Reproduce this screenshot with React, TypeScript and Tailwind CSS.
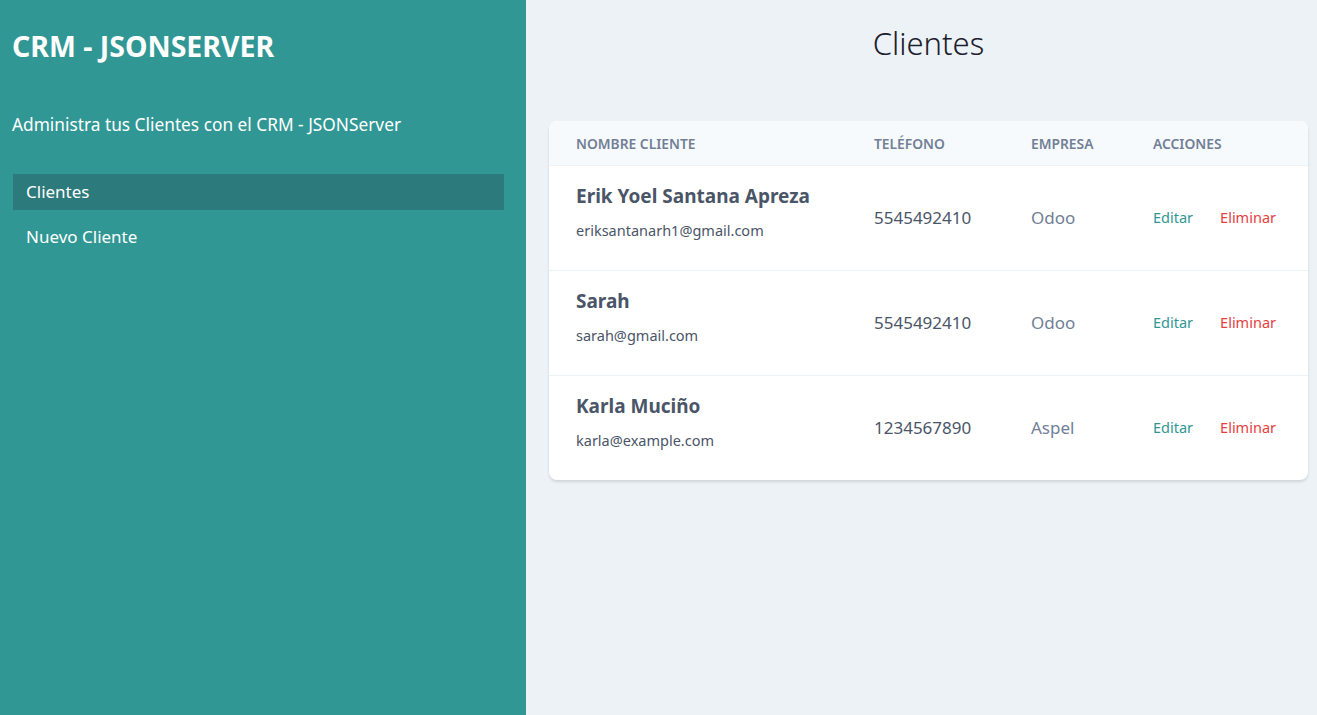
const clientes = [
  { nombre: 'Erik Yoel Santana Apreza', email: 'eriksantanarh1@gmail.com', telefono: '5545492410', empresa: 'Odoo' },
  { nombre: 'Sarah', email: 'sarah@gmail.com', telefono: '5545492410', empresa: 'Odoo' },
  { nombre: 'Karla Muciño', email: 'karla@example.com', telefono: '1234567890', empresa: 'Aspel' },
];

export default function App() {
  return (
    <div
      className="flex min-h-[715px] w-full"
      style={{ fontFamily: '"Noto Sans", "Open Sans", sans-serif' }}
    >
      <aside className="w-[526px] shrink-0 bg-[#319795] pl-[12px] pr-[22px] pt-[26px]">
        <h1 className="text-[28.5px] font-bold leading-10 text-white">CRM - JSONSERVER</h1>
        <p className="mt-[46px] text-[17.3px] text-white">Administra tus Clientes con el CRM - JSONServer</p>
        <nav className="mt-[36px] flex flex-col gap-[9px] pl-px">
          <a className="block h-9 bg-[#2c7a7b] px-[13px] text-[17px] leading-9 text-white">Clientes</a>
          <a className="block h-9 px-[13px] text-[17px] leading-9 text-white">Nuevo Cliente</a>
        </nav>
      </aside>

      <main className="flex-1 bg-[#edf2f7] pl-[23px] pr-[9px] pt-[20px]">
        <h2 className="text-center text-[31px] font-light leading-[46px] text-[#1a202c]">Clientes</h2>

        <div className="mt-[55px] overflow-hidden rounded-lg bg-white shadow-[0_2px_3px_rgba(0,0,0,0.12)]">
          <table className="w-full table-fixed border-collapse">
            <colgroup>
              <col className="w-[298px]" />
              <col className="w-[157px]" />
              <col className="w-[122px]" />
              <col />
            </colgroup>
            <thead>
              <tr className="h-[44px] border-b border-[#edf2f7] bg-[#f7fafc] text-left text-[13.8px] uppercase text-[#718096]">
                <th className="px-[27px] pt-[4px] font-semibold">Nombre Cliente</th>
                <th className="px-[27px] pt-[4px] font-semibold">Teléfono</th>
                <th className="px-[27px] pt-[4px] font-semibold">Empresa</th>
                <th className="px-[27px] pt-[4px] font-semibold">Acciones</th>
              </tr>
            </thead>
            <tbody>
              {clientes.map((c, i) => (
                <tr
                  key={c.nombre}
                  className={`h-[105px] ${i < clientes.length - 1 ? 'border-b border-[#edf2f7]' : ''}`}
                >
                  <td className="px-[27px] pb-[10px]">
                    <p className="text-[19px] font-bold leading-6 text-[#4a5568]">{c.nombre}</p>
                    <p className="mt-[12px] text-[14.5px] text-[#4a5568]">{c.email}</p>
                  </td>
                  <td className="px-[27px] text-[17px] text-[#4a5568]">{c.telefono}</td>
                  <td className="px-[27px] text-[17px] text-[#718096]">{c.empresa}</td>
                  <td className="px-[27px] text-[14.5px]">
                    <button className="mr-[27px] text-[#319795]">Editar</button>
                    <button className="text-[#e53e3e]">Eliminar</button>
                  </td>
                </tr>
              ))}
            </tbody>
          </table>
        </div>
      </main>
    </div>
  );
}
